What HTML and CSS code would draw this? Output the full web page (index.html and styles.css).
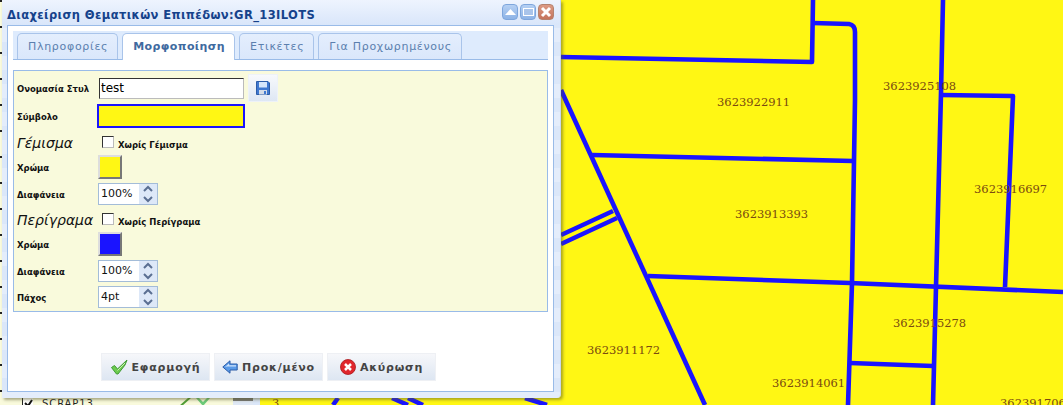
FILE: index.html
```html
<!DOCTYPE html>
<html lang="el">

<head>
 <meta charset="UTF-8">
 <title>Διαχείριση Θεματικών Επιπέδων</title>
 <link rel="stylesheet" href="styles.css">
</head>

<body>

 <section id="map">
  <svg class="map-lines" width="1063" height="405" viewBox="0 0 1063 405">
   <g fill="none" stroke="#1a14ff" stroke-width="4.6" stroke-linejoin="round">
    <path d="M561 57L812 62L813 0" />
    <path d="M813 23L849 24Q855 25 855 32L855 100L852 283L848 405" />
    <path d="M943 0L941 93L936 287L933 405" />
    <path d="M941 95L1013 96L1005 287" />
    <path d="M561 90L705 405" />
    <path d="M592 155L853 161" />
    <path d="M648 276L850 283L1063 292" />
    <path d="M561 235L613 211" />
    <path d="M561 244L617 218" />
    <path d="M850 363L933 366" />
    <path d="M338 398L333 405" />
    <path d="M392 398L408 405" />
    <path d="M408 398L423 405" />
    <path d="M525 398L547 405" />
   </g>
  </svg>
  <span class="parcel p1">3623922911</span>
  <span class="parcel p2">3623925108</span>
  <span class="parcel p3">3623916697</span>
  <span class="parcel p4">3623913393</span>
  <span class="parcel p5">3623915278</span>
  <span class="parcel p6">3623911172</span>
  <span class="parcel p7">3623914061</span>
  <span class="parcel p8">3623917061</span>
  <span class="parcel p9">3</span>
 </section>

 <section id="tree">
  <div class="tree-row">
   <span class="tree-check">
    <svg width="11" height="11" viewBox="0 0 11 11"><path d="M2 5L5 8L9 2" fill="none" stroke="#111" stroke-width="2" /></svg>
   </span>
   <span class="tree-name">SCRAP13</span>
   <span class="tree-icons">
    <svg width="13" height="8" viewBox="0 0 13 8"><path d="M1 8L10 0H13L4 8z" fill="#4f9e35" /></svg>
    <svg width="14" height="8" viewBox="0 0 14 8"><path d="M0 0H3L7 4L11 0H14L7 8z" fill="#6ccb7a" /></svg>
   </span>
   <span class="tree-style"></span>
  </div>
 </section>

 <section id="win">
  <header class="win-head">
   <h1>Διαχείριση Θεματικών Επιπέδων:GR_13ILOTS</h1>
   <div class="win-tools">
    <button class="tool"><svg width="13" height="8" viewBox="0 0 13 8"><path d="M6.5 1L12 7H1z" fill="#fff" /></svg></button>
    <button class="tool"><svg width="13" height="10" viewBox="0 0 13 10"><rect x="1.5" y="1.5" width="10" height="7" fill="#a9c4ea" stroke="#fff" /></svg></button>
    <button class="tool close"><svg width="12" height="12" viewBox="0 0 12 12"><path d="M2 2L10 10M10 2L2 10" stroke="#fff" stroke-width="3" /></svg></button>
   </div>
  </header>

  <div class="win-body">
   <nav class="tabs">
    <a class="tab">Πληροφορίες</a>
    <a class="tab active">Μορφοποίηση</a>
    <a class="tab">Ετικέτες</a>
    <a class="tab">Για Προχωρημένους</a>
   </nav>

   <form class="panel">
    <div class="row row-name">
     <label>Ονομασία Στυλ</label>
     <input class="name-input" type="text" value="test">
     <button class="save" type="button">
      <svg width="14" height="14" viewBox="0 0 14 14">
       <path d="M.5 .5H12L13.5 2V13.5H.5z" fill="#3f78d0" stroke="#2c5ca8" />
       <rect x="3" y="1" width="8" height="5.5" fill="#d5e6fb" />
       <rect x="3" y="9" width="8" height="4.5" fill="#d5dde8" />
       <rect x="8" y="10" width="2" height="3" fill="#3f78d0" />
      </svg>
     </button>
    </div>
    <div class="row row-symbol">
     <label>Σύμβολο</label>
     <div class="symbol"></div>
    </div>
    <div class="row row-head">
     <span class="section">Γέμισμα</span>
     <span class="check"></span>
     <label>Χωρίς Γέμισμα</label>
    </div>
    <div class="row row-color">
     <label>Χρώμα</label>
     <div class="swatch yellow"></div>
    </div>
    <div class="row row-spin">
     <label>Διαφάνεια</label>
     <div class="spin"><span class="spin-val">100%</span><span class="spin-btns">
       <svg width="12" height="20" viewBox="0 0 12 20"><path d="M2 7L6 3L10 7M2 13L6 17L10 13" fill="none" stroke="#5a6f92" stroke-width="2" /></svg></span></div>
    </div>
    <div class="row row-head">
     <span class="section">Περίγραμα</span>
     <span class="check"></span>
     <label>Χωρίς Περίγραμα</label>
    </div>
    <div class="row row-color">
     <label>Χρώμα</label>
     <div class="swatch blue"></div>
    </div>
    <div class="row row-spin">
     <label>Διαφάνεια</label>
     <div class="spin"><span class="spin-val">100%</span><span class="spin-btns">
       <svg width="12" height="20" viewBox="0 0 12 20"><path d="M2 7L6 3L10 7M2 13L6 17L10 13" fill="none" stroke="#5a6f92" stroke-width="2" /></svg></span></div>
    </div>
    <div class="row row-spin">
     <label>Πάχος</label>
     <div class="spin"><span class="spin-val">4pt</span><span class="spin-btns">
       <svg width="12" height="20" viewBox="0 0 12 20"><path d="M2 7L6 3L10 7M2 13L6 17L10 13" fill="none" stroke="#5a6f92" stroke-width="2" /></svg></span></div>
    </div>
   </form>

   <div class="actions">
    <button class="btn" type="button">
     <svg width="17" height="16" viewBox="0 0 17 16"><path d="M.5 8.5L3.5 6.5L6.5 10L16 1L14 6L7 15H5.5z" fill="#6ccb4e" stroke="#3f9a35" /><path d="M6.5 11.5L14 4" stroke="#c9f0b0" fill="none" /></svg>
     Εφαρμογή</button>
    <button class="btn" type="button">
     <svg width="16" height="14" viewBox="0 0 16 14"><path d="M.8 7L8 .8V4H15.2V10H8V13.2z" fill="#5b9be8" stroke="#2c5ca8" /><path d="M3 7L7 3.5V5.2H14V6.5H5z" fill="#cfe3fb" /></svg>
     Προκ/μένο</button>
    <button class="btn" type="button">
     <svg width="16" height="16" viewBox="0 0 16 16"><circle cx="8" cy="8" r="7.5" fill="#e0262c" stroke="#a8181c" stroke-width=".8" /><path d="M5 5L11 11M11 5L5 11" stroke="#fff" stroke-width="2.5" /></svg>
     Ακύρωση</button>
   </div>
  </div>
 </section>

</body>

</html>
```

FILE: styles.css
```css
* {
 box-sizing: border-box;
}

body {
 margin: 0;
 width: 1063px;
 height: 405px;
 overflow: hidden;
 position: relative;
 background: #fff;
 font-family: "DejaVu Sans", sans-serif;
}

/* map behind everything */
#map {
 position: absolute;
 inset: 0;
 background: #fff714;
}

.map-lines {
 position: absolute;
 left: 0;
 top: 0;
}

.parcel {
 position: absolute;
 font-family: "DejaVu Serif", serif;
 font-size: 11.5px;
 line-height: 14px;
 color: #7a4a10;
}

.p1 { left: 717px; top: 95px; }
.p2 { left: 883px; top: 79px; }
.p3 { left: 974px; top: 182px; }
.p4 { left: 735px; top: 207px; }
.p5 { left: 893px; top: 316px; }
.p6 { left: 587px; top: 343px; }
.p7 { left: 772px; top: 376px; }
.p8 { left: 1000px; top: 396px; }
.p9 { left: 272px; top: 396px; }

/* layer tree, almost all of it under the window */
#tree {
 position: absolute;
 left: 0;
 top: 0;
 width: 260px;
 height: 405px;
 display: flex;
 background:
  repeating-linear-gradient(#222 0, #222 2px, transparent 2px, transparent 26px) 0 0 / 2px 100% no-repeat,
  #f9fadc;
}

.tree-row {
 margin-top: auto;
 width: 100%;
 height: 7px;
 padding-left: 22px;
 display: flex;
 overflow: hidden;
}

.tree-check {
 width: 11px;
 height: 11px;
 flex: none;
 background: #fff;
 border-left: 1px solid #222;
 margin-right: 9px;
}

.tree-check svg {
 display: block;
}

.tree-name {
 width: 136px;
 flex: none;
 font-size: 10px;
 line-height: 10px;
 margin-top: 1px;
 color: #222;
 letter-spacing: .9px;
}

.tree-icons {
 width: 55px;
 flex: none;
 display: flex;
 gap: 5px;
}

.tree-icons svg {
 display: block;
}

.tree-style {
 flex: 1;
 background: linear-gradient(#777 0, #777 3px, #dfe8f5 3px);
 border-right: 7px solid #dbe7f9;
}

/* window */
#win {
 position: absolute;
 left: 2px;
 top: 0;
 width: 559px;
 height: 398px;
 padding: 0 6px 6px 5px;
 display: flex;
 flex-direction: column;
 border-right: 1px solid #c9d8ee;
 border-radius: 0 0 4px 0;
 box-shadow: 2px 2px 3px rgba(90, 90, 40, .5);
 background: repeating-linear-gradient(#e4edfb 0, #e4edfb 14px, #dbe7f9 14px, #dbe7f9 28px);
}

.win-head {
 height: 25px;
 flex: none;
 display: flex;
 justify-content: space-between;
 background: linear-gradient(#eef4fe, #d9e6fa);
 margin-left: -5px;
 margin-right: -6px;
 padding: 0 6px 0 5px;
}

.win-head h1 {
 margin: 0;
 font-size: 11.5px;
 font-weight: bold;
 line-height: 31px;
 letter-spacing: .4px;
 color: #15428b;
 white-space: nowrap;
}

.win-tools {
 display: flex;
 gap: 2px;
 padding-top: 4px;
}

.tool {
 width: 16px;
 height: 16px;
 padding: 0;
 border: 1px solid #7ea6dc;
 border-radius: 4px;
 background: linear-gradient(#b5d0f3, #8db3e6);
 display: flex;
 align-items: center;
 justify-content: center;
}

.tool.close {
 border-color: #b5826e;
 background: linear-gradient(#dc9a84, #c4745c);
}

.win-body {
 flex: 1;
 background: #fff;
 border: 1px solid #99bbe8;
 padding: 5px;
 display: flex;
 flex-direction: column;
}

.tabs {
 display: flex;
 gap: 4px;
 height: 29px;
 flex: none;
 padding: 2px 0 0 4px;
 background: #deebfd;
 border-bottom: 1px solid #99bbe8;
}

.tab {
 height: 26px;
 padding: 0 9px 0 10px;
 font-size: 11px;
 line-height: 25px;
 letter-spacing: .7px;
 color: #5b7fae;
 border: 1px solid #a9c4ea;
 border-bottom: 0;
 border-radius: 5px 5px 0 0;
 background: linear-gradient(#e4eefd, #dae7fb);
}

.tab.active {
 height: 27px;
 background: #fff;
 color: #3f6a9f;
 font-weight: bold;
 letter-spacing: .4px;
}

.panel {
 margin-top: 10px;
 height: 242px;
 flex: none;
 padding: 4px 0 0 3px;
 background: #f9fadc;
 border: 1px solid #99bbe8;
}

.row {
 display: flex;
 align-items: center;
}

.row label {
 font-weight: bold;
 font-size: 8.5px;
 padding-top: 1px;
 color: #111;
 white-space: nowrap;
}

.row>label:first-child {
 width: 82px;
 flex: none;
}

.row-name {
 height: 26px;
}

.name-input {
 width: 145px;
 height: 21px;
 padding: 0 1px;
 border: 1px solid #bbb;
 border-top-color: #333;
 border-left-color: #333;
 font-family: "DejaVu Sans", sans-serif;
 font-size: 12px;
 margin-right: 4px;
}

.save {
 width: 30px;
 height: 28px;
 flex: none;
 padding: 0;
 border: 1px solid #eef2f8;
 background: linear-gradient(#f7f9fc, #dee7f4);
 display: flex;
 align-items: center;
 justify-content: center;
}

.row-symbol {
 height: 24px;
 margin-top: 3px;
}

.symbol {
 width: 148px;
 height: 24px;
 margin-left: -2px;
 background: #fff714;
 border: 2px solid #1a14ff;
}

.row-head {
 height: 23px;
 margin-top: 2px;
}

.section {
 width: 85px;
 flex: none;
 padding-top: 2px;
 font-size: 14px;
 font-style: italic;
 color: #111;
}

.check {
 width: 12px;
 height: 12px;
 flex: none;
 margin-right: 4px;
 background: #fff;
 border: 1px solid #333;
 border-right-color: #bbb;
 border-bottom-color: #bbb;
}

.row-head label {
 padding-top: 7px;
}

.row-color {
 height: 24px;
 margin-top: 2px;
}

.swatch {
 width: 24px;
 height: 24px;
 margin-left: -1px;
 border: 2px solid;
 border-color: #ddd #777 #777 #ddd;
}

.swatch.yellow {
 background: #fff714;
}

.swatch.blue {
 background: #1a14ff;
}

.row-spin {
 height: 22px;
 margin-top: 4px;
}

.spin {
 width: 60px;
 height: 22px;
 margin-left: -1px;
 display: flex;
 background: #fff;
 border: 1px solid #a3bcd8;
}

.spin-val {
 flex: 1;
 padding-left: 2px;
 font-size: 11px;
 line-height: 20px;
 color: #111;
}

.spin-btns {
 width: 18px;
 background: #dde8f8;
 display: flex;
 align-items: center;
 justify-content: center;
}

.actions {
 display: flex;
 gap: 4px;
 padding: 41px 0 0 88px;
}

.btn {
 width: 109px;
 height: 28px;
 padding: 0;
 display: flex;
 align-items: center;
 justify-content: center;
 gap: 4px;
 font-family: "DejaVu Sans", sans-serif;
 font-size: 11px;
 font-weight: bold;
 letter-spacing: .8px;
 white-space: nowrap;
 color: #444;
 border: 1px solid #eef0f4;
 background: linear-gradient(#f6f7fa, #dde6f2);
}
```
